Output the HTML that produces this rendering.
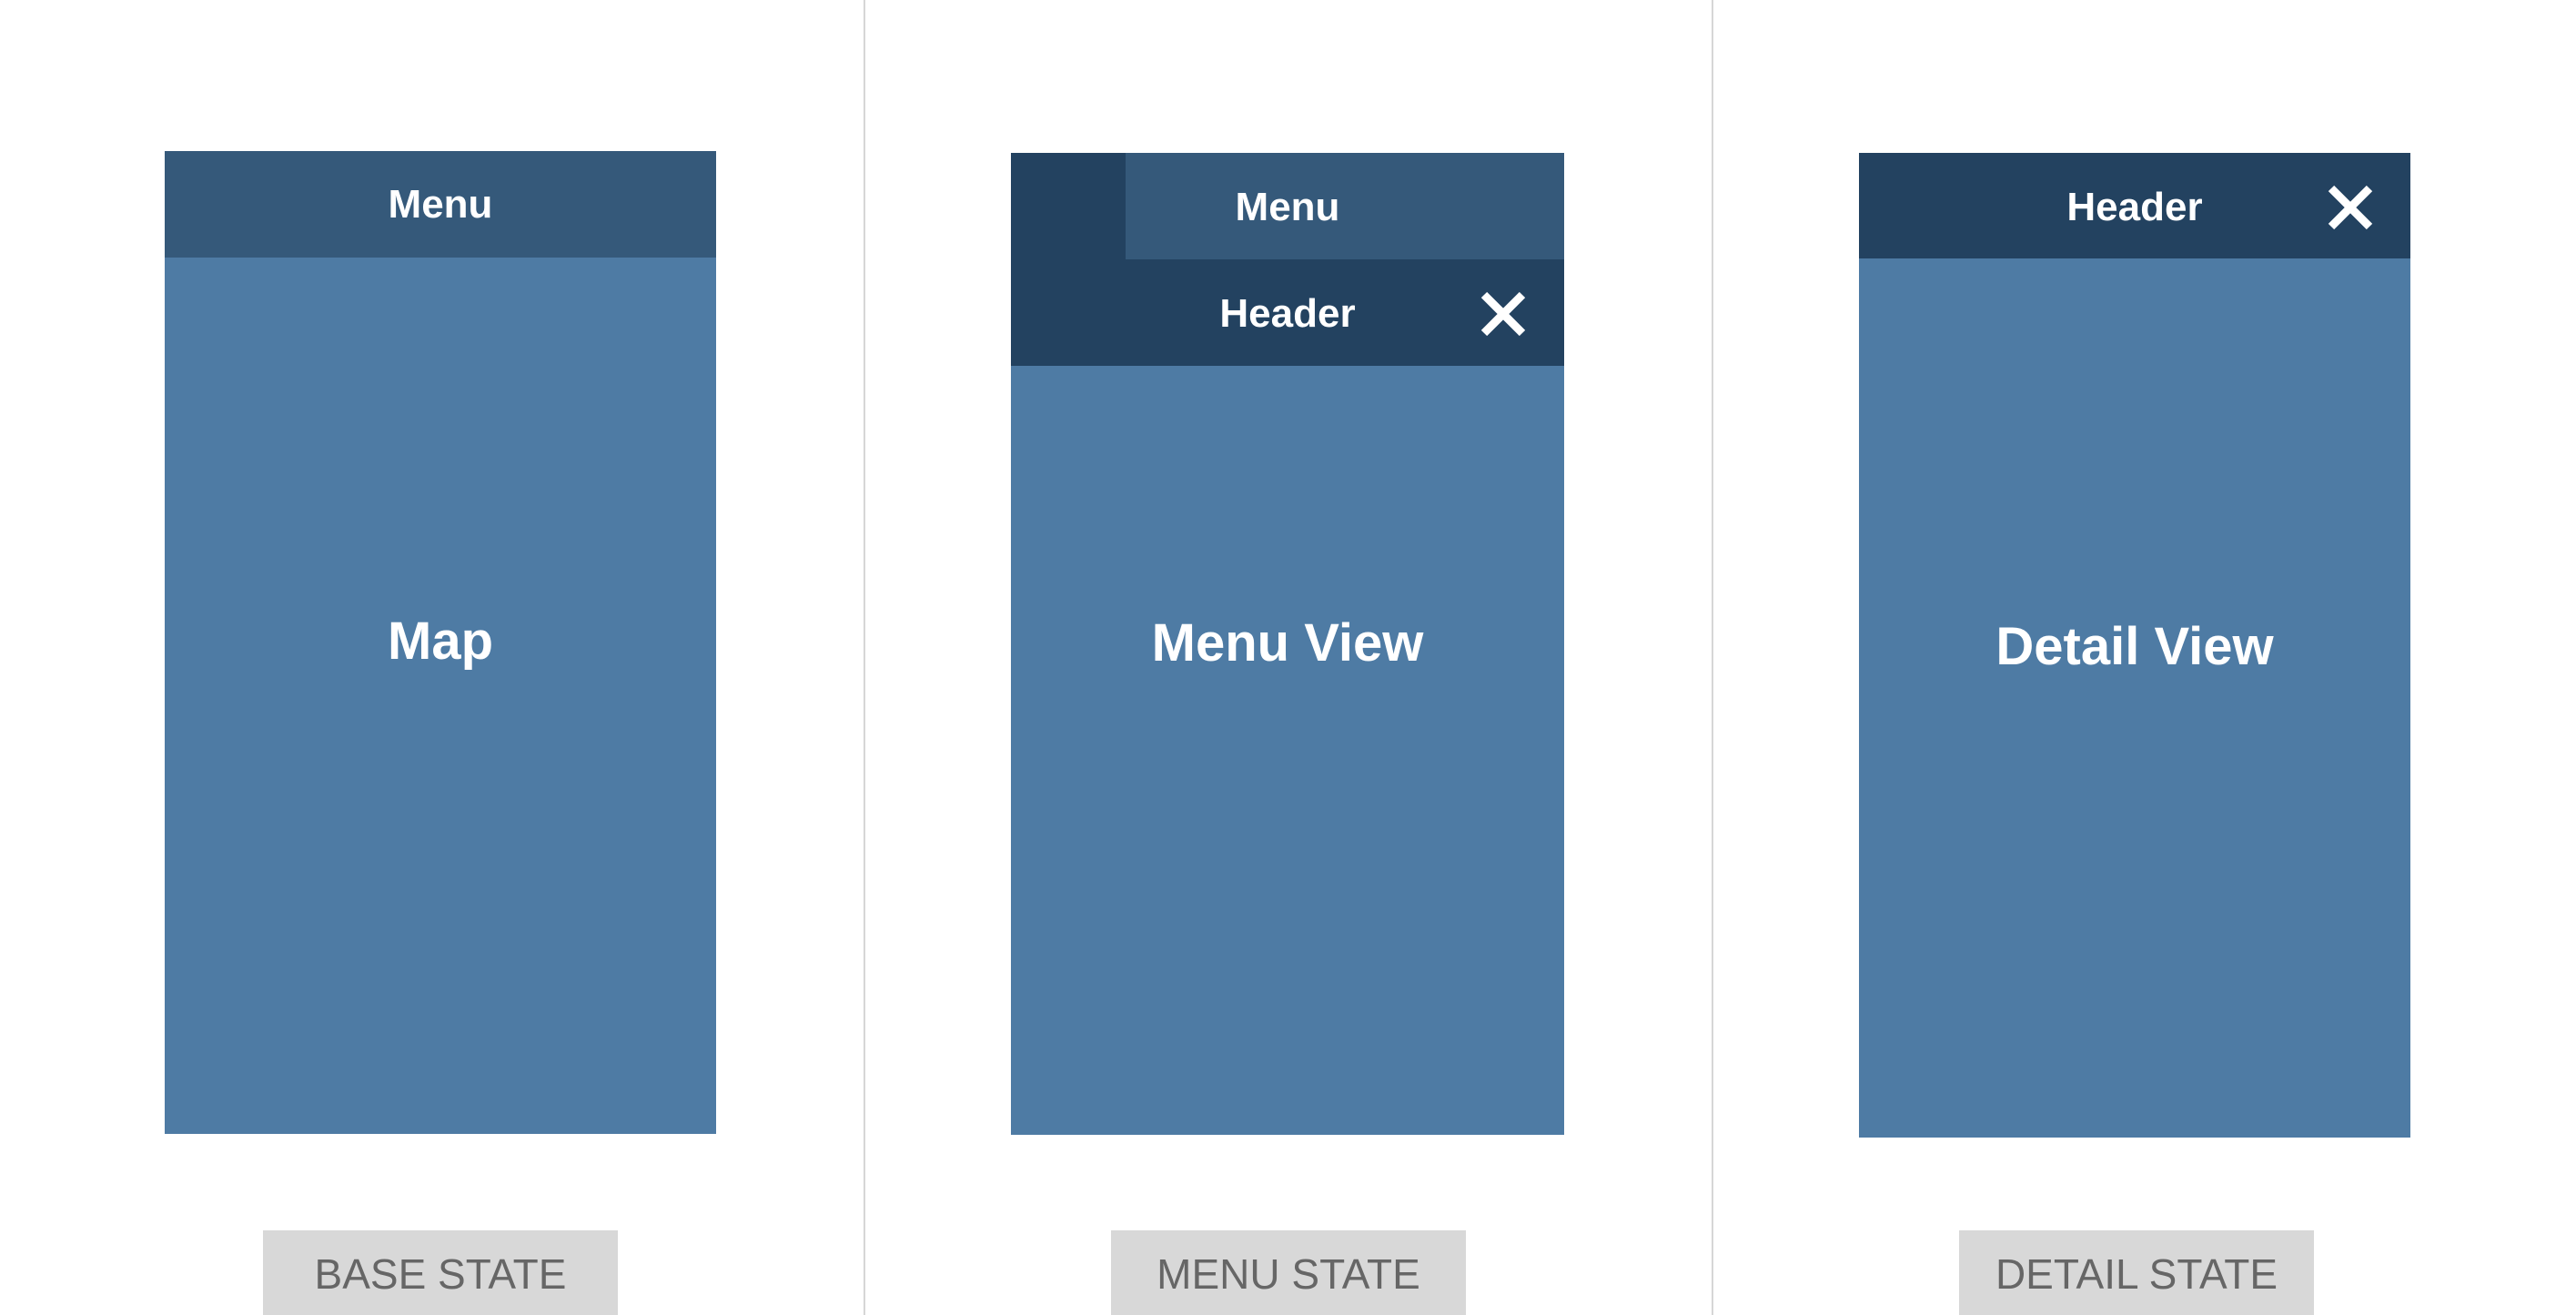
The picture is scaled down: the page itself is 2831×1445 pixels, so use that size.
<!DOCTYPE html>
<html><head><style>
html,body{margin:0;padding:0;background:#fff;width:2831px;height:1445px;overflow:hidden;position:relative;font-family:"Liberation Sans",sans-serif}
.a{position:absolute}
.body{background:#4e7ba4}
.menu{background:#35597a}
.hdr{background:#234260}
.t{position:absolute;color:#fff;font-weight:bold;text-align:center;white-space:nowrap}
.div{position:absolute;top:0;width:2px;height:1445px;background:#d6d6d6}
.lab{position:absolute;top:1352px;height:93px;width:390px;background:#d8d8d8;color:#666;font-size:46px;text-align:center;line-height:96px}
.x{position:absolute}
</style></head><body>
<div class="div" style="left:949px"></div>
<div class="div" style="left:1881px"></div>

<!-- panel 1 -->
<div class="a body" style="left:181px;top:166px;width:606px;height:1080px"></div>
<div class="a menu" style="left:181px;top:166px;width:606px;height:117px"></div>
<div class="t" style="left:181px;width:606px;top:197px;font-size:44px;line-height:56px">Menu</div>
<div class="t" style="left:181px;width:606px;top:670px;font-size:58px;line-height:70px">Map</div>
<div class="lab" style="left:289px">BASE STATE</div>

<!-- panel 2 -->
<div class="a body" style="left:1111px;top:168px;width:608px;height:1079px"></div>
<div class="a hdr" style="left:1111px;top:168px;width:608px;height:234px"></div>
<div class="a menu" style="left:1237px;top:168px;width:482px;height:117px"></div>
<div class="t" style="left:1111px;width:608px;top:200px;font-size:44px;line-height:56px">Menu</div>
<div class="t" style="left:1111px;width:608px;top:317px;font-size:44px;line-height:56px">Header</div>
<svg class="x" style="left:1626px;top:319px" width="52" height="52" viewBox="0 0 52 52"><path d="M5 5L47 47M47 5L5 47" stroke="#fff" stroke-width="9"/></svg>
<div class="t" style="left:1111px;width:608px;top:672px;font-size:58px;line-height:70px">Menu View</div>
<div class="lab" style="left:1221px">MENU STATE</div>

<!-- panel 3 -->
<div class="a body" style="left:2043px;top:168px;width:606px;height:1082px"></div>
<div class="a hdr" style="left:2043px;top:168px;width:606px;height:116px"></div>
<div class="t" style="left:2043px;width:606px;top:200px;font-size:44px;line-height:56px">Header</div>
<svg class="x" style="left:2557px;top:202px" width="52" height="52" viewBox="0 0 52 52"><path d="M5 5L47 47M47 5L5 47" stroke="#fff" stroke-width="9"/></svg>
<div class="t" style="left:2043px;width:606px;top:676px;font-size:58px;line-height:70px">Detail View</div>
<div class="lab" style="left:2153px">DETAIL STATE</div>
</body></html>
